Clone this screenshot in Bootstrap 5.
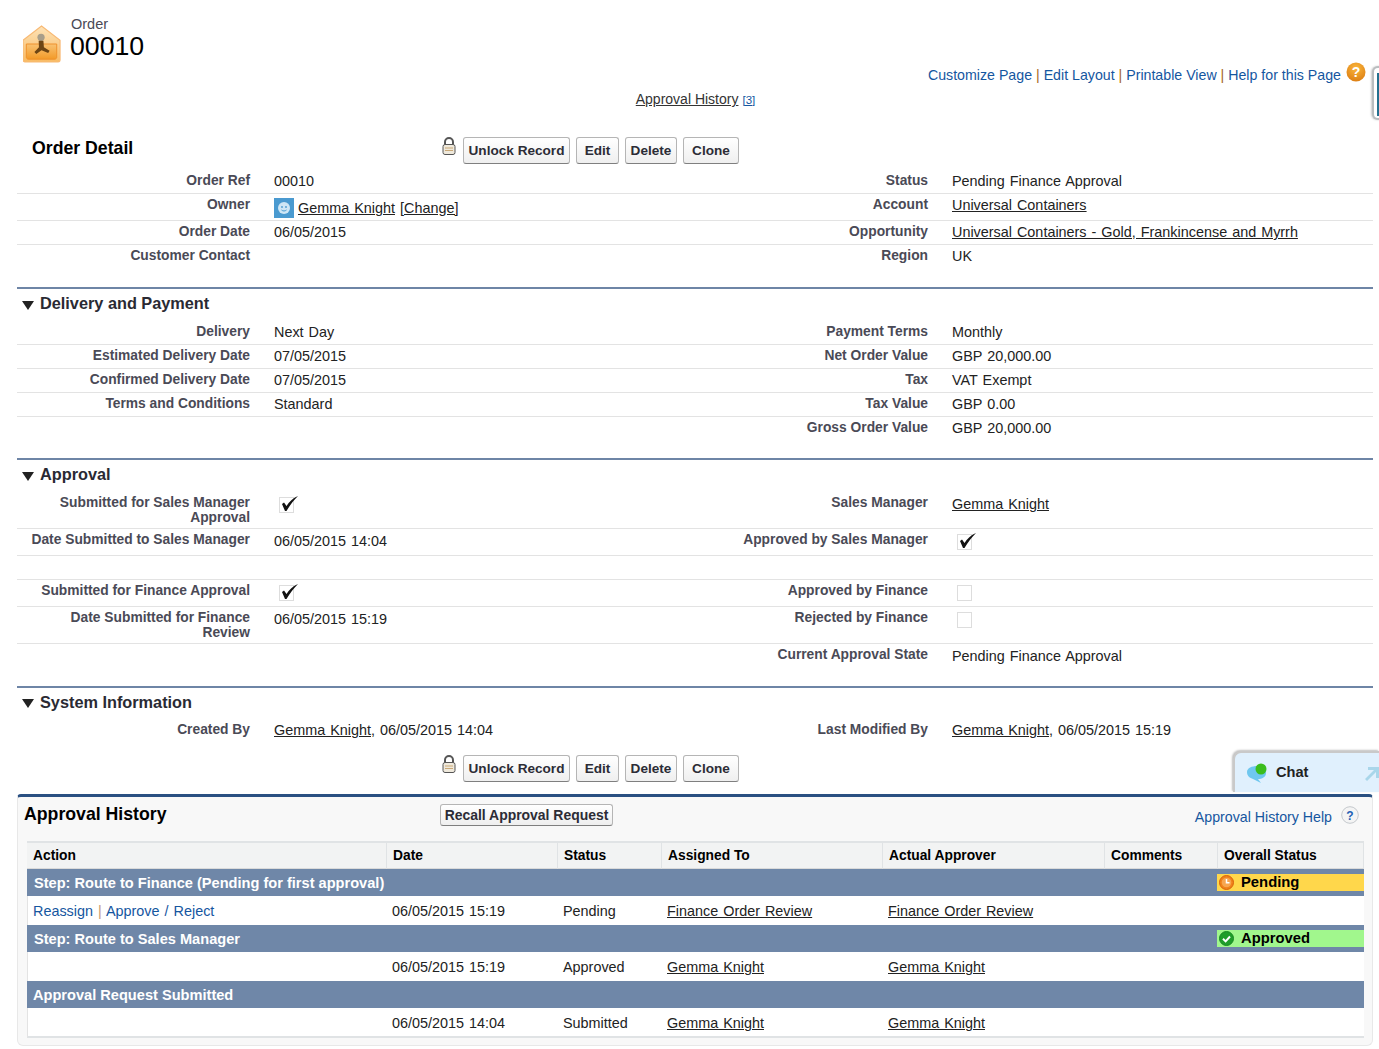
<!DOCTYPE html>
<html lang="en">
<head>
<meta charset="utf-8">
<title>Order 00010</title>
<link rel="stylesheet" href="https://cdn.jsdelivr.net/npm/bootstrap@5.3.0/dist/css/bootstrap.min.css">
<style>
html,body{height:1049px;overflow:hidden}
body{font-family:"Liberation Sans",Arial,sans-serif;font-size:14.4px;word-spacing:1px;color:#222;background:#fff;line-height:17px}
a{color:#222}
.sf-head{height:62px;padding:16px 0 0 23px}
.sf-head svg{margin-top:9px;display:block}
.sf-type{font-size:14.5px;word-spacing:0;color:#4a4a56;line-height:16px;margin-left:2px}
.sf-name{font-size:26.7px;line-height:29px;color:#000;margin-left:1px}
.sf-links{height:25px;padding-right:13px;padding-top:2px;color:#a5671f;font-size:14.2px;word-spacing:0}
.sf-links a{color:#15569f;text-decoration:none}
.sf-links .sf-sep{white-space:pre}
.sf-help{margin-top:-7px;margin-left:5px}
.sf-sub{height:25px;padding:4px 0 0 12px;font-size:14px;word-spacing:0}
.sf-sub a{color:#333}
.sf-sub span{font-size:11.5px;color:#15569f;margin-left:4px;text-decoration:underline}
.sf-wrap{margin:0 6px 0 17px}
.sf-title{margin-top:25px;height:33px}
.sf-title h2{width:424px;margin:0;padding:0 0 0 15px;font-size:17.7px;font-weight:700;color:#000;line-height:22px;word-spacing:0}
.sf-bar{gap:6px}
.sf-bar2{margin:12px 0 0 424px}
.sf-btn{height:27px;padding:0;font-family:inherit;font-size:13.6px;word-spacing:0;font-weight:700;color:#2c2c36;line-height:25px;border:1px solid #b5b5b5;border-bottom-color:#7f7f7f;border-radius:3px;background:linear-gradient(#fff,#efefef);--bs-btn-hover-bg:#eee}
.sf-b1{width:107px}.sf-b2{width:43px}.sf-b3{width:52px}.sf-b4{width:56px}
.sf-lock{align-self:flex-start}
.sf-row{display:flex;height:24px;border-bottom:1px solid #e3e3e3}
.sf-row.nb{border-bottom:0}
.r27{height:27px}.r37{height:37px}
.sf-lab{flex:0 0 233px;text-align:right;font-weight:700;font-size:13.8px;word-spacing:0;color:#4a4a56;line-height:15px;padding-top:3px;margin-right:24px}
.sf-val{flex:0 0 421px;padding-top:3px;line-height:17px}
.sf-sec{border-top:2px solid #6e85a6;margin-top:18px}
.sf-sec.sf-m17{margin-top:17px}
.sf-m17 .sf-val{padding-top:4px}
.sf-sec h3{height:32px;margin:0;font-size:16.3px;word-spacing:0;font-weight:700;color:#2a2a33;line-height:29px;padding-left:5px;display:flex;align-items:center;gap:6px}
.sf-sec h3.sf-h31{height:31px}
.sf-sec h3 span{margin-top:-3px}
.sf-ck{display:block;margin-top:-3px;overflow:visible}
.sf-who{vertical-align:-5px;margin-right:4px}
.sf-own{padding-top:4px}
.sf-panel{position:relative;z-index:2;height:252px;margin-top:12px;background:#f8f8f8;border:1px solid #e8e8e8;border-top:3px solid #2a5082;border-radius:4px 4px 6px 6px;padding:0 7px 0 9px}
.sf-phead{height:44px}
.sf-phead h2{width:416px;margin:0 0 0 -3px;font-size:17.7px;word-spacing:0;font-weight:700;line-height:22px;color:#000;padding-top:6px;flex:none}
.sf-recall{width:173px;height:22px;padding:0;line-height:20px;margin-top:7px;font-size:13.95px}
.sf-phelp{margin-left:auto;margin-right:6px;padding-top:12px;color:#15569f;gap:9px;display:flex;font-size:14.2px;word-spacing:0}
.sf-phelp a{color:#15569f;text-decoration:none}
.sf-phelp svg{margin-top:-3px}
.sf-tbl{table-layout:fixed;width:1337px;margin:0;border-collapse:separate;border-spacing:0;--bs-table-bg:transparent;background:#fff}
.sf-tbl th,.sf-tbl td{padding:0 0 0 6px;border:0;font-size:14.4px;color:#222;line-height:17px;vertical-align:middle;box-shadow:none}
.sf-tbl thead th{height:28px;background:#f2f3f3;border-top:2px solid #e0e3e5;border-right:1px solid #e0e3e5;border-bottom:1px solid #dadada;font-size:13.8px;word-spacing:0;font-weight:700;color:#000;padding-top:0}
.sf-tbl .sf-step td{height:27px;background:#6f87a8;color:#fff;font-weight:700;padding:2px 0 0 7px;font-size:14.6px;word-spacing:0}
.sf-tbl .sf-step td.sf-s3{padding-left:6px}
.sf-tbl .sf-data td{height:29px;padding-left:5px;background:#fff;padding-top:2px}
.sf-tbl .sf-data td:first-child{padding-left:5px;border-left:1px solid #e3e3e3}
.sf-tbl .sf-data:last-child td{height:30px;padding-top:3px;border-bottom:2px solid #e0e3e5}
.sf-tbl .sf-acts{word-spacing:1px}
.sf-tbl .sf-acts a{color:#15569f;text-decoration:none}
.sf-tbl .sf-acts span{color:#c49a72}
.sf-tbl .sf-step td.sf-st{padding:0}
.sf-pill{display:flex;align-items:center;gap:7px;height:17px;margin-left:-1px;padding-left:2px;font-size:14.8px;color:#000}
.sf-pend{background:#ffd74b}.sf-appr{background:#a1f78d}
.sf-chat{position:absolute;left:1233px;top:751px;width:146px;height:41px;background:#e0f0fd;border:1px solid #c9c9c9;border-width:2px 0 0 2px;border-top-left-radius:8px;box-shadow:-1px -1px 2px rgba(0,0,0,.25);padding-left:11px;font-weight:700;color:#222;font-size:14.6px;gap:6px}
.sf-chat .sf-arrow{position:absolute;right:0;top:14px}
.sf-tab{position:absolute;left:1372px;top:66px;width:10px;height:54px;background:#fff;border:2px solid #b9bdbf;border-right:0;border-radius:6px 0 0 6px;box-shadow:-1px 0 2px rgba(0,0,0,.2)}
.sf-tab i{position:absolute;left:3px;top:5px;width:4px;height:43px;background:#23708f}
</style>
</head>
<body>
<header class="sf-head d-flex gap-2">
  <svg width="38" height="38" viewBox="0 0 40 40"><defs><linearGradient id="g1" x1="0" y1="0" x2="0" y2="1"><stop offset="0" stop-color="#fde3b8"/><stop offset="1" stop-color="#f8bb64"/></linearGradient><linearGradient id="g3" x1="0" y1="0" x2="0" y2="1"><stop offset="0" stop-color="#f9c272"/><stop offset="1" stop-color="#f29a28"/></linearGradient></defs><path d="M19.500 1 39 16v21c0 1-1 2-2 2H2c-1 0-2-1-2-2V16Z" fill="url(#g1)" stroke="#f8b974" stroke-width="1.200"/><path d="M3.500 20h32v14c0 1-1 2-2 2h-28c-1 0-2-1-2-2Z" fill="url(#g3)" stroke="#ee8f2a"/><circle cx="19" cy="13" r="3.800" fill="#a89e8a"/><path d="M16.500 16.500h5l.5 7 6 3.500-1.500 2.500-7-3-5.500 4-2-2.200 4.800-4.800Z" fill="#6d4514"/></svg>
  <div><div class="sf-type">Order</div><div class="sf-name">00010</div></div>
</header>
<nav class="sf-links d-flex justify-content-end align-items-center">
  <a href="#">Customize Page</a><span class="sf-sep"> | </span><a href="#">Edit Layout</a><span class="sf-sep"> | </span><a href="#">Printable View</a><span class="sf-sep"> | </span><a href="#">Help for this Page</a>
  <svg class="sf-help" width="20" height="20" viewBox="0 0 20 20"><defs><radialGradient id="g2" cx=".5" cy=".3" r=".8"><stop offset="0" stop-color="#fbb73c"/><stop offset="1" stop-color="#d9780f"/></radialGradient></defs><circle cx="10" cy="10" r="9.500" fill="url(#g2)"/><text x="10" y="15" text-anchor="middle" font-family="Liberation Sans" font-weight="700" font-size="14" fill="#fff">?</text></svg>
</nav>
<div class="sf-sub text-center"><a href="#">Approval History</a><span>[3]</span></div>
<main class="sf-wrap">
  <div class="sf-title d-flex">
    <h2>Order Detail</h2>
    <div class="sf-bar d-flex">
      <svg class="sf-lock" width="16" height="20" viewBox="0 0 16 20"><path d="M4 8V5a4 4 0 0 1 8 0v3" fill="none" stroke="#555" stroke-width="2"/><rect x="2" y="7.500" width="12" height="10" rx="2" fill="#efe9dc" stroke="#555"/><path d="M4 11h8M4 13.500h8" stroke="#c9a877"/></svg>
      <button class="btn sf-btn sf-b1">Unlock Record</button><button class="btn sf-btn sf-b2">Edit</button><button class="btn sf-btn sf-b3">Delete</button><button class="btn sf-btn sf-b4">Clone</button>
    </div>
  </div>
  <section>
    <div class="sf-row"><div class="sf-lab">Order Ref</div><div class="sf-val">00010</div><div class="sf-lab">Status</div><div class="sf-val">Pending Finance Approval</div></div>
    <div class="sf-row r27"><div class="sf-lab">Owner</div><div class="sf-val sf-own"><svg class="sf-who" width="20" height="20" viewBox="0 0 20 20"><rect width="20" height="20" fill="#4a9ad0"/><circle cx="10" cy="10" r="6" fill="#cfe6f5"/><circle cx="8" cy="9" r=".9" fill="#4a9ad0"/><circle cx="12" cy="9" r=".9" fill="#4a9ad0"/><path d="M7.500 12c1.500 1.300 3.500 1.300 5 0" fill="none" stroke="#4a9ad0"/></svg><a href="#">Gemma Knight</a> <a href="#">[Change]</a></div><div class="sf-lab">Account</div><div class="sf-val"><a href="#">Universal Containers</a></div></div>
    <div class="sf-row"><div class="sf-lab">Order Date</div><div class="sf-val">06/05/2015</div><div class="sf-lab">Opportunity</div><div class="sf-val"><a href="#">Universal Containers - Gold, Frankincense and Myrrh</a></div></div>
    <div class="sf-row nb"><div class="sf-lab">Customer Contact</div><div class="sf-val"></div><div class="sf-lab">Region</div><div class="sf-val">UK</div></div>
  </section>
  <section class="sf-sec">
    <h3><svg width="12" height="9" viewBox="0 0 12 9"><path d="M0 0h12L6 9Z" fill="#222"/></svg><span>Delivery and Payment</span></h3>
    <div class="sf-row"><div class="sf-lab">Delivery</div><div class="sf-val">Next Day</div><div class="sf-lab">Payment Terms</div><div class="sf-val">Monthly</div></div>
    <div class="sf-row"><div class="sf-lab">Estimated Delivery Date</div><div class="sf-val">07/05/2015</div><div class="sf-lab">Net Order Value</div><div class="sf-val">GBP 20,000.00</div></div>
    <div class="sf-row"><div class="sf-lab">Confirmed Delivery Date</div><div class="sf-val">07/05/2015</div><div class="sf-lab">Tax</div><div class="sf-val">VAT Exempt</div></div>
    <div class="sf-row"><div class="sf-lab">Terms and Conditions</div><div class="sf-val">Standard</div><div class="sf-lab">Tax Value</div><div class="sf-val">GBP 0.00</div></div>
    <div class="sf-row nb"><div class="sf-lab"></div><div class="sf-val"></div><div class="sf-lab">Gross Order Value</div><div class="sf-val">GBP 20,000.00</div></div>
  </section>
  <section class="sf-sec sf-m17">
    <h3><svg width="12" height="9" viewBox="0 0 12 9"><path d="M0 0h12L6 9Z" fill="#222"/></svg><span>Approval</span></h3>
    <div class="sf-row r37"><div class="sf-lab">Submitted for Sales Manager<br>Approval</div><div class="sf-val"><svg class="sf-ck" width="26" height="22" viewBox="0 0 26 22"><rect x="5.500" y="4.500" width="14" height="15" fill="none" stroke="#bbb" stroke-dasharray="1 1"/><path d="M8 11l2-1.500 2.500 3.500C15 9 19 5 24 3c-4 4-8 9-11.500 15H11Z" fill="#111"/></svg></div><div class="sf-lab">Sales Manager</div><div class="sf-val"><a href="#">Gemma Knight</a></div></div>
    <div class="sf-row r27"><div class="sf-lab">Date Submitted to Sales Manager</div><div class="sf-val">06/05/2015 14:04</div><div class="sf-lab">Approved by Sales Manager</div><div class="sf-val"><svg class="sf-ck" width="26" height="22" viewBox="0 0 26 22"><rect x="5.500" y="4.500" width="14" height="15" fill="none" stroke="#bbb" stroke-dasharray="1 1"/><path d="M8 11l2-1.500 2.500 3.500C15 9 19 5 24 3c-4 4-8 9-11.500 15H11Z" fill="#111"/></svg></div></div>
    <div class="sf-row"><div class="sf-lab"></div><div class="sf-val"></div><div class="sf-lab"></div><div class="sf-val"></div></div>
    <div class="sf-row r27"><div class="sf-lab">Submitted for Finance Approval</div><div class="sf-val"><svg class="sf-ck" width="26" height="22" viewBox="0 0 26 22"><rect x="5.500" y="4.500" width="14" height="15" fill="none" stroke="#bbb" stroke-dasharray="1 1"/><path d="M8 11l2-1.500 2.500 3.500C15 9 19 5 24 3c-4 4-8 9-11.500 15H11Z" fill="#111"/></svg></div><div class="sf-lab">Approved by Finance</div><div class="sf-val"><svg class="sf-ck" width="26" height="22" viewBox="0 0 26 22"><rect x="5.500" y="4.500" width="14" height="15" fill="none" stroke="#bbb" stroke-dasharray="1 1"/></svg></div></div>
    <div class="sf-row r37"><div class="sf-lab">Date Submitted for Finance<br>Review</div><div class="sf-val">06/05/2015 15:19</div><div class="sf-lab">Rejected by Finance</div><div class="sf-val"><svg class="sf-ck" width="26" height="22" viewBox="0 0 26 22"><rect x="5.500" y="4.500" width="14" height="15" fill="none" stroke="#bbb" stroke-dasharray="1 1"/></svg></div></div>
    <div class="sf-row nb"><div class="sf-lab"></div><div class="sf-val"></div><div class="sf-lab">Current Approval State</div><div class="sf-val">Pending Finance Approval</div></div>
  </section>
  <section class="sf-sec">
    <h3 class="sf-h31"><svg width="12" height="9" viewBox="0 0 12 9"><path d="M0 0h12L6 9Z" fill="#222"/></svg><span>System Information</span></h3>
    <div class="sf-row nb"><div class="sf-lab">Created By</div><div class="sf-val"><a href="#">Gemma Knight</a>, 06/05/2015 14:04</div><div class="sf-lab">Last Modified By</div><div class="sf-val"><a href="#">Gemma Knight</a>, 06/05/2015 15:19</div></div>
  </section>
  <div class="sf-bar sf-bar2 d-flex">
    <svg class="sf-lock" width="16" height="20" viewBox="0 0 16 20"><path d="M4 8V5a4 4 0 0 1 8 0v3" fill="none" stroke="#555" stroke-width="2"/><rect x="2" y="7.500" width="12" height="10" rx="2" fill="#efe9dc" stroke="#555"/><path d="M4 11h8M4 13.500h8" stroke="#c9a877"/></svg>
    <button class="btn sf-btn sf-b1">Unlock Record</button><button class="btn sf-btn sf-b2">Edit</button><button class="btn sf-btn sf-b3">Delete</button><button class="btn sf-btn sf-b4">Clone</button>
  </div>
  <section class="sf-panel">
    <div class="sf-phead d-flex">
      <h2>Approval History</h2>
      <button class="btn sf-btn sf-recall">Recall Approval Request</button>
      <div class="sf-phelp"><a href="#">Approval History Help</a><svg width="18" height="18" viewBox="0 0 18 18"><circle cx="9" cy="9" r="8.300" fill="#f4f4f4" stroke="#c4c8cc"/><text x="9" y="13.500" text-anchor="middle" font-family="Liberation Sans" font-weight="700" font-size="12" fill="#1f5fb4">?</text></svg></div>
    </div>
    <table class="table sf-tbl">
      <colgroup><col style="width:360px"><col style="width:171px"><col style="width:104px"><col style="width:221px"><col style="width:222px"><col style="width:113px"><col style="width:146px"></colgroup>
      <thead><tr><th>Action</th><th>Date</th><th>Status</th><th>Assigned To</th><th>Actual Approver</th><th>Comments</th><th>Overall Status</th></tr></thead>
      <tbody>
        <tr class="sf-step"><td colspan="6">Step: Route to Finance (Pending for first approval)</td><td class="sf-st"><div class="sf-pill sf-pend"><svg width="15" height="15" viewBox="0 0 15 15"><circle cx="7.500" cy="7.500" r="7" fill="#f0821a" stroke="#d9620c"/><circle cx="7.500" cy="7.500" r="4.800" fill="#f7a650"/><path d="M7.500 4v3.800h3" fill="none" stroke="#fff" stroke-width="1.500"/></svg>Pending</div></td></tr>
        <tr class="sf-data"><td class="sf-acts"><a href="#">Reassign</a> <span>|</span> <a href="#">Approve / Reject</a></td><td>06/05/2015 15:19</td><td>Pending</td><td><a href="#">Finance Order Review</a></td><td><a href="#">Finance Order Review</a></td><td></td><td></td></tr>
        <tr class="sf-step"><td colspan="6">Step: Route to Sales Manager</td><td class="sf-st"><div class="sf-pill sf-appr"><svg width="15" height="15" viewBox="0 0 15 15"><circle cx="7.500" cy="7.500" r="7" fill="#1f9d2a" stroke="#178a22"/><path d="M4 7.800l2.600 2.600L11 5.500" fill="none" stroke="#fff" stroke-width="2"/></svg>Approved</div></td></tr>
        <tr class="sf-data"><td></td><td>06/05/2015 15:19</td><td>Approved</td><td><a href="#">Gemma Knight</a></td><td><a href="#">Gemma Knight</a></td><td></td><td></td></tr>
        <tr class="sf-step"><td colspan="7" class="sf-s3">Approval Request Submitted</td></tr>
        <tr class="sf-data"><td></td><td>06/05/2015 14:04</td><td>Submitted</td><td><a href="#">Gemma Knight</a></td><td><a href="#">Gemma Knight</a></td><td></td><td></td></tr>
      </tbody>
    </table>
  </section>
</main>
<aside class="sf-chat d-flex align-items-center"><svg width="24" height="22" viewBox="0 0 24 22"><path d="M1 10c0-4 5-6 10-6s9 3 9 7-4 6-8 6l3 4-8-4c-3-1-6-3-6-7Z" fill="#6fc7ef"/><circle cx="15" cy="7" r="5.500" fill="#3bbd1c"/></svg>Chat<svg class="sf-arrow" width="14" height="14" viewBox="0 0 14 14"><path d="M3 0h11v11h-3V5L2 14 0 12l9-9H3Z" fill="#a9d6ea"/></svg></aside>
<div class="sf-tab"><i></i></div>
<script src="https://cdn.jsdelivr.net/npm/bootstrap@5.3.0/dist/js/bootstrap.bundle.min.js"></script>
</body>
</html>
